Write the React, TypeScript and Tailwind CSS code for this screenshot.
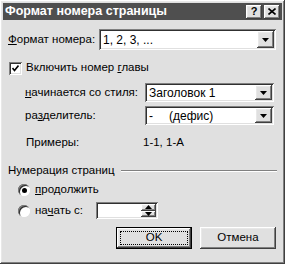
import React from 'react'

const font = { fontFamily: '"Liberation Sans", Arial, sans-serif' }

const raised =
  'shadow-[inset_-1px_-1px_0_#404040,inset_1px_1px_0_#ffffff,inset_-2px_-2px_0_#808080,inset_2px_2px_0_#e8e8e8]'
const sunken =
  'shadow-[inset_1px_1px_0_#808080,inset_-1px_-1px_0_#ffffff,inset_2px_2px_0_#303030,inset_-2px_-2px_0_#e0e0e0]'

function Arrow({ up = false }: { up?: boolean }) {
  return (
    <svg width="7" height="4" viewBox="0 0 7 4">
      <path d={up ? 'M0 4h7L3.5 0z' : 'M0 0h7L3.5 4z'} fill="#000" />
    </svg>
  )
}

function Combo({ value, className }: { value: React.ReactNode; className: string }) {
  return (
    <div className={`flex items-stretch bg-white p-[2px] ${sunken} ${className}`}>
      <div className="flex flex-1 items-center pl-[2px] text-[12px] text-black">{value}</div>
      <div className={`flex w-[17px] items-center justify-center bg-[#e0e0e0] ${raised}`}>
        <Arrow />
      </div>
    </div>
  )
}

export default function App() {
  return (
    <div
      style={font}
      className={`flex h-[264px] w-[285px] flex-col overflow-hidden whitespace-nowrap bg-[#e0e0e0] p-[3px] text-[11.5px] leading-none text-black ${raised}`}
    >
      {/* Title bar */}
      <div className="flex h-[17px] shrink-0 items-center justify-between bg-[#4f4f4f] px-[2px]">
        <span className="text-[12.5px] font-bold text-white">Формат номера страницы</span>
        <div className="flex gap-[2px]">
          <div className={`flex h-[14px] w-[16px] items-center justify-center bg-[#e0e0e0] text-[11px] font-bold ${raised}`}>
            ?
          </div>
          <div className={`flex h-[14px] w-[16px] items-center justify-center bg-[#e0e0e0] ${raised}`}>
            <svg width="8" height="7" viewBox="0 0 8 7">
              <path d="M0.5 0.5l7 6M7.5 0.5l-7 6" stroke="#000" strokeWidth="1.6" />
            </svg>
          </div>
        </div>
      </div>

      <div className="flex flex-1 flex-col px-[5px]">
        {/* Format row */}
        <div className="mt-[9px] flex h-[21px] items-center">
          <span className="w-[91px]">
            <u>Ф</u>ормат номера:
          </span>
          <Combo value="1, 2, 3, ..." className="h-[21px] w-[177px]" />
        </div>

        {/* Chapter checkbox */}
        <div className="mt-[11px] flex h-[14px] items-center gap-[4px] pl-[1px]">
          <div className={`flex h-[13px] w-[13px] items-center justify-center bg-white ${sunken}`}>
            <svg width="7" height="7" viewBox="0 0 7 7">
              <path d="M0.5 3l2 2.5 4-5" stroke="#000" strokeWidth="1.6" fill="none" />
            </svg>
          </div>
          <span>
            Включить номер <u>г</u>лавы
          </span>
        </div>

        <div className="mt-[8px] flex h-[19px] items-center pl-[17px]">
          <span className="w-[120px]">
            <u>н</u>ачинается со стиля:
          </span>
          <Combo value="Заголовок 1" className="h-[19px] w-[129px]" />
        </div>

        <div className="mt-[4px] flex h-[19px] items-center pl-[17px]">
          <span className="w-[120px]">
            ра<u>з</u>делитель:
          </span>
          <Combo
            value={
              <span className="flex">
                <span className="w-[20px]">-</span>(дефис)
              </span>
            }
            className="h-[19px] w-[129px]"
          />
        </div>

        <div className="mt-[11px] flex h-[14px] items-center pl-[18px]">
          <span className="w-[117px]">Примеры:</span>
          <span>1-1, 1-A</span>
        </div>

        {/* Page numbering group */}
        <div className="mt-[14px] flex h-[14px] items-center gap-[6px]">
          <span>Нумерация страниц</span>
          <div className="h-[2px] flex-1 border-t border-b border-t-[#808080] border-b-white" />
        </div>

        <div className="mt-[5px] flex h-[14px] items-center gap-[5px] pl-[10px]">
          <div className="flex h-[12px] w-[12px] items-center justify-center rounded-full bg-white shadow-[inset_1px_1px_0_#808080,inset_-1px_-1px_0_#ffffff,inset_2px_2px_0_#303030]">
            <div className="h-[5px] w-[5px] rounded-full bg-black" />
          </div>
          <span>
            <u>п</u>родолжить
          </span>
        </div>

        <div className="mt-[5px] flex h-[17px] items-center pl-[10px]">
          <div className="h-[12px] w-[12px] rounded-full bg-white shadow-[inset_1px_1px_0_#808080,inset_-1px_-1px_0_#ffffff,inset_2px_2px_0_#303030]" />
          <span className="ml-[5px] w-[61px]">
            на<u>ч</u>ать с:
          </span>
          <div className={`flex h-[17px] w-[62px] items-stretch bg-white p-[2px] ${sunken}`}>
            <div className="flex-1" />
            <div className="flex w-[15px] flex-col">
              <div className={`flex flex-1 items-center justify-center bg-[#e0e0e0] ${raised}`}>
                <Arrow up />
              </div>
              <div className={`flex flex-1 items-center justify-center bg-[#e0e0e0] ${raised}`}>
                <Arrow />
              </div>
            </div>
          </div>
        </div>

        {/* Buttons */}
        <div className="mt-[8px] flex justify-end gap-[8px] pr-[1px]">
          <div className="h-[22px] w-[76px] border border-black bg-[#e0e0e0]">
            <div className={`h-full w-full p-[3px] ${raised}`}>
              <div className="flex h-full w-full items-center justify-center border border-dotted border-black">
                OK
              </div>
            </div>
          </div>
          <div className={`flex h-[22px] w-[76px] items-center justify-center bg-[#e0e0e0] ${raised}`}>
            Отмена
          </div>
        </div>
      </div>
    </div>
  )
}
